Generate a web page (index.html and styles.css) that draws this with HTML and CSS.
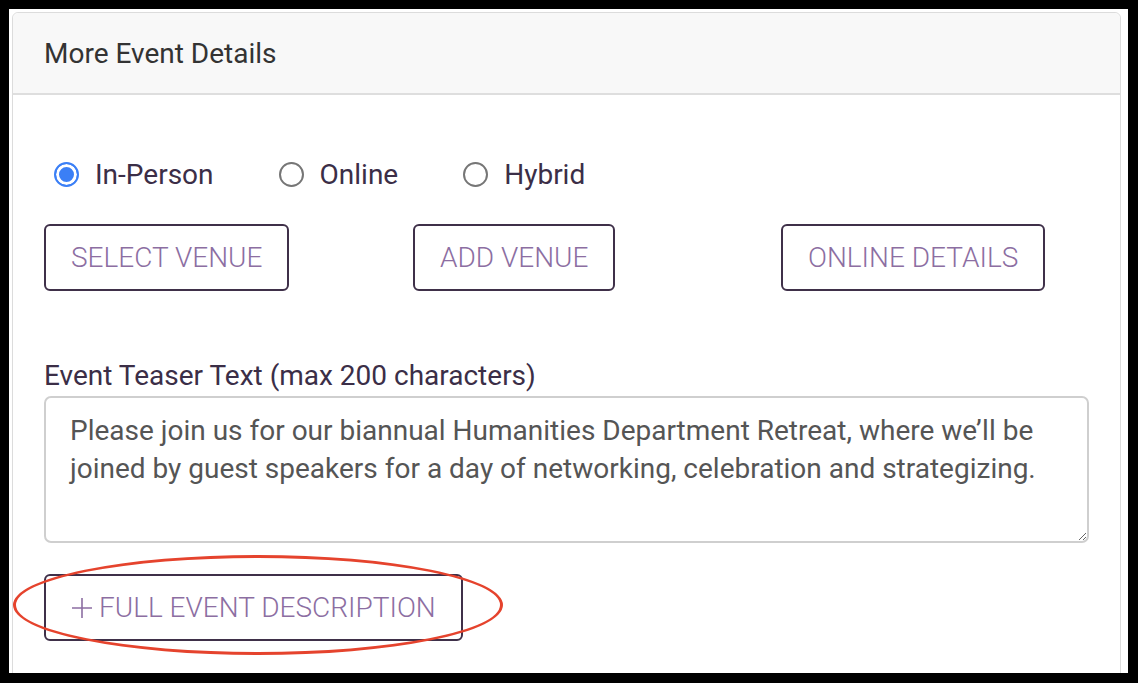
FILE: index.html
```html
<!DOCTYPE html>
<html>
<head>
    <title>More Event Details</title>
    <link rel="stylesheet" href="styles.css">
</head>
<body>
    <div class="frame">
        <div class="card">
            <div class="card-header">More Event Details</div>

            <div class="card-body">
                <div class="radio-row">
                    <label class="radio-option">
                        <input type="radio" name="event-type" value="in-person" checked>
                        <span>In-Person</span>
                    </label>
                    <label class="radio-option">
                        <input type="radio" name="event-type" value="online">
                        <span>Online</span>
                    </label>
                    <label class="radio-option">
                        <input type="radio" name="event-type" value="hybrid">
                        <span>Hybrid</span>
                    </label>
                </div>

                <div class="venue-buttons">
                    <div><button type="button" class="outline-btn">Select Venue</button></div>
                    <div><button type="button" class="outline-btn">Add Venue</button></div>
                    <div><button type="button" class="outline-btn">Online Details</button></div>
                </div>

                <label for="teaser" class="field-label">Event Teaser Text (max 200 characters)</label>
                <textarea id="teaser" class="teaser">Please join us for our biannual Humanities Department Retreat, where we’ll be joined by guest speakers for a day of networking, celebration and strategizing.</textarea>

                <div class="description-wrap">
                    <button type="button" class="outline-btn full-desc">
                        <svg class="plus" width="22" height="22" viewBox="0 0 22 22">
                            <path d="M11 1v20M1 11h20" stroke="currentColor" stroke-width="1.6" fill="none"/>
                        </svg>
                        Full Event Description
                    </button>
                    <span class="highlight"></span>
                </div>
            </div>
        </div>
    </div>
</body>
</html>
```

FILE: styles.css
```css
body {
    margin: 0;
    padding: 0;
    background-color: #fff;
    font-family: Roboto, "Liberation Sans", sans-serif;
}

.frame {
    width: 1138px;
    height: 683px;
    box-sizing: border-box;
    border-style: solid;
    border-color: #000;
    border-width: 9px 10px 10px 9px;
    overflow: hidden;
    background-color: #fff;
}

.card {
    margin: 3px 7px 0 3px;
    height: 700px;
    border: 1px solid #dcdcdc;
    border-radius: 6px;
    background-color: #fff;
}

.card-header {
    height: 82px;
    box-sizing: border-box;
    padding: 0 31px;
    display: flex;
    align-items: center;
    background-color: #f8f8f8;
    border-bottom: 2px solid #dedede;
    border-radius: 6px 6px 0 0;
    color: #333;
    font-size: 28px;
}

.card-body {
    padding: 59px 31px 0 31px;
}

.radio-row {
    display: flex;
    align-items: center;
    height: 40px;
}

.radio-option {
    display: flex;
    align-items: center;
    margin-right: 55px;
    color: #3b2e47;
    font-size: 28px;
    cursor: pointer;
}

.radio-option input {
    appearance: none;
    -webkit-appearance: none;
    width: 25px;
    height: 25px;
    margin: 0 16px 0 10px;
    border: 2px solid #767676;
    border-radius: 50%;
    background-color: #fff;
}

.radio-option input:checked {
    border-color: #3b7ff6;
    background-color: #3b7ff6;
    box-shadow: inset 0 0 0 3px #fff;
}

.venue-buttons {
    display: grid;
    grid-template-columns: 369px 368px auto;
    margin-top: 30px;
}

.outline-btn {
    height: 67px;
    padding: 0 25px;
    border: 2px solid #3f3049;
    border-radius: 6px;
    background-color: #fff;
    color: #8c6ea2;
    font-family: Roboto, "Liberation Sans", sans-serif;
    font-size: 28px;
    font-weight: 300;
    text-transform: uppercase;
    cursor: pointer;
}

.field-label {
    display: block;
    margin-top: 70px;
    margin-bottom: 5px;
    color: #3b2e47;
    font-size: 28px;
    line-height: 30px;
}

.teaser {
    display: block;
    width: 100%;
    height: 147px;
    box-sizing: border-box;
    padding: 14px 24px;
    border: 2px solid #cfcfcf;
    border-radius: 7px;
    color: #555;
    font-family: Roboto, "Liberation Sans", sans-serif;
    font-size: 28px;
    line-height: 38px;
    resize: vertical;
}

.description-wrap {
    position: relative;
    margin-top: 31px;
}

.full-desc {
    display: flex;
    align-items: center;
    gap: 6px;
}

.plus {
    color: #8c6ea2;
}

.highlight {
    position: absolute;
    left: -31px;
    top: -19px;
    width: 484px;
    height: 94px;
    border: 3px solid #e5432d;
    border-radius: 50%;
    pointer-events: none;
}
```
